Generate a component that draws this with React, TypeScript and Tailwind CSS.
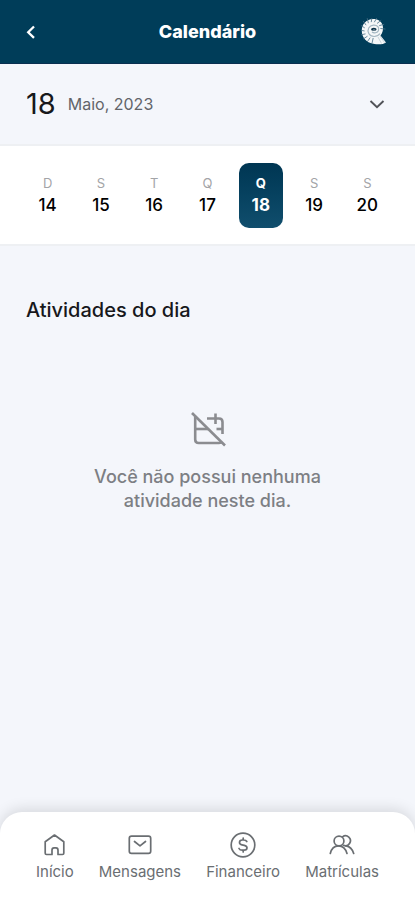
import React, { useState } from 'react';

const days = [
  { day: 14, letter: 'D', name: 'Domingo' },
  { day: 15, letter: 'S', name: 'Segunda' },
  { day: 16, letter: 'T', name: 'Terça' },
  { day: 17, letter: 'Q', name: 'Quarta' },
  { day: 18, letter: 'Q', name: 'Quinta' },
  { day: 19, letter: 'S', name: 'Sexta' },
  { day: 20, letter: 'S', name: 'Sábado' },
];

const ShellLogo: React.FC = () => {
  // Ridges fan out from the centre of the shell, each one ends in a notch on the rim
  const ridges = Array.from({ length: 13 }, (_, i) => {
    const a = ((i * 22 + 85) * Math.PI) / 180;
    return {
      x1: 11.5 + Math.cos(a) * 8,
      y1: 12 + Math.sin(a) * 8,
      x2: 11.5 + Math.cos(a + 0.12) * 13,
      y2: 12 + Math.sin(a + 0.12) * 13,
    };
  });

  return (
    <svg width="26" height="28" viewBox="0 0 26 28" fill="none" aria-hidden="true">
      <path
        d="M12 1C17 .8 20.500 3.500 21.700 7.500C22.700 11 21.500 15 19.500 17.500L25 24.500C22 26.800 15 27 9.500 25C4 23 .8 18.500 .8 12.500C.8 6 5.500 1.200 12 1Z"
        fill="#f4f7f8"
      />
      {ridges.map((r, i) => (
        <line key={i} x1={r.x1} y1={r.y1} x2={r.x2} y2={r.y2} stroke="#476f85" strokeWidth="0.8" />
      ))}
      <path d="M17 19L20.500 25.500M19 18L23.500 24.500" stroke="#b4c4cd" strokeWidth="0.7" />
      <path
        d="M19 15.500C16 19.500 10 19.500 7.800 15.500C5.800 11.500 8 7.500 12.500 7.200C16.500 7 18.500 9.500 17.500 12.500C16.500 15 13 15.500 11 14"
        stroke="#a3b6c1"
        strokeWidth="1.200"
      />
      <ellipse cx="12.800" cy="11.200" rx="2.800" ry="1.500" fill="#0d3349" />
      <path d="M12 11.800H14.200" stroke="#8fa5b2" strokeWidth="0.8" />
    </svg>
  );
};

const CalendarOffIcon: React.FC = () => (
  <svg width="36" height="36" viewBox="0 0 36 36" fill="none" stroke="#8b8c90" strokeWidth="2.600" aria-hidden="true">
    <path d="M2 2L35 34.500" />
    <path d="M5.200 6V28.500Q5.200 32 8.700 32H29Q31.500 32 32 31" />
    <path d="M5 18H18" />
    <path d="M17 7.500H29Q32.500 7.500 32.500 11V23" />
    <path d="M26.500 18H33" />
    <path d="M25.500 2.500V13" />
  </svg>
);

const HomeIcon: React.FC = () => (
  <svg width="26" height="26" viewBox="0 0 26 26" fill="none" stroke="currentColor" strokeWidth="1.700" strokeLinejoin="round">
    <path d="M3.200 9.700L12.500 3L21.800 9.700V21.200Q21.800 22.500 20.500 22.500H16V18.200Q16 15.800 14 15.800H12Q10 15.800 10 18.200V22.500H4.500Q3.200 22.500 3.200 21.200Z" />
  </svg>
);

const MailIcon: React.FC = () => (
  <svg width="26" height="26" viewBox="0 0 26 26" fill="none" stroke="currentColor" strokeWidth="1.700" strokeLinecap="round" strokeLinejoin="round">
    <rect x="2.300" y="4.200" width="21.400" height="17.200" rx="2.200" />
    <path d="M7.500 9.500L13 13.800L18.500 9.500" />
  </svg>
);

const MoneyIcon: React.FC = () => (
  <svg width="26" height="26" viewBox="0 0 26 26" fill="none" stroke="currentColor" strokeWidth="1.700" strokeLinecap="round" strokeLinejoin="round">
    <circle cx="13" cy="13" r="11.800" />
    <path d="M16.800 9.500Q16 8 13.500 8H12.300Q9.500 8 9.500 10.400Q9.500 12.300 12 12.800L14.300 13.300Q17 13.900 17 15.800Q17 18.200 14 18.200H12.300Q9.800 18.200 9 16.500M13.200 6V8M13.200 18.200V20" />
  </svg>
);

const PeopleIcon: React.FC = () => (
  <svg width="26" height="26" viewBox="0 0 26 26" fill="none" stroke="currentColor" strokeWidth="1.700" strokeLinecap="round" strokeLinejoin="round">
    <circle cx="10" cy="9" r="4.900" />
    <path d="M13.500 4.900A4.900 4.900 0 1 1 14.500 13.300" />
    <path d="M1.300 21.500C2.500 16.500 5.500 13.900 9.500 13.900S16.500 16.500 18 21.500" />
    <path d="M17 13.900C21 14.500 23.500 17.500 24.700 21.500" />
  </svg>
);

const navItems = [
  { label: 'Início', icon: HomeIcon },
  { label: 'Mensagens', icon: MailIcon },
  { label: 'Financeiro', icon: MoneyIcon },
  { label: 'Matrículas', icon: PeopleIcon },
];

const App: React.FC = () => {
  const [selected, setSelected] = useState(18);

  return (
    <div className="flex min-h-screen flex-col bg-[#f4f6fb] font-['Inter',sans-serif] text-[#17181b]">
      <header className="grid h-16 grid-cols-3 items-center border-b border-[#0a2f50] bg-[#003d59] px-6 text-white">
        <button type="button" aria-label="Voltar" className="justify-self-start">
          <svg width="14" height="18" viewBox="0 0 14 18" fill="none" stroke="currentColor" strokeWidth="2.300" aria-hidden="true">
            <path d="M10 3.500L4.200 9.200L10 14.900" />
          </svg>
        </button>
        <h1 className="justify-self-center text-lg font-extrabold">Calendário</h1>
        <div className="justify-self-end pr-1">
          <ShellLogo />
        </div>
      </header>

      <main className="flex-1">
        <button type="button" aria-label="Escolher data" className="flex h-20 w-full items-center px-[26px]">
          <span className="text-[29px]">{selected}</span>
          <span className="ml-3 text-base text-[#626469]">Maio, 2023</span>
          <svg className="mr-1 ml-auto" width="16" height="16" viewBox="0 0 16 16" fill="none" stroke="#505257" strokeWidth="1.900" aria-hidden="true">
            <path d="M1.500 5L8 11.300L14.500 5" />
          </svg>
        </button>

        <div className="flex h-[102px] items-center border-y-2 border-[#eef0f3] bg-white px-[21px]">
          {days.map(({ day, letter, name }) => (
            <div key={day} className="flex flex-1 justify-center">
              <button
                type="button"
                aria-label={`${name}, ${day}`}
                onClick={() => setSelected(day)}
                className={
                  day === selected
                    ? 'flex h-[65px] w-11 flex-col items-center justify-center rounded-[10px] bg-linear-to-b from-[#003653] to-[#104e6d] text-white'
                    : 'flex h-[65px] w-11 flex-col items-center justify-center text-black'
                }
              >
                <span className={day === selected ? 'text-[13px] leading-5 font-bold' : 'text-[13px] leading-5 text-[#a3a4a7]'}>
                  {letter}
                </span>
                <span className={day === selected ? 'text-[17px] leading-6 font-bold' : 'text-[17px] leading-6 font-medium'}>
                  {day}
                </span>
              </button>
            </div>
          ))}
        </div>

        <section className="px-[26px] pt-[50px]">
          <h2 className="text-xl leading-7 font-medium">Atividades do dia</h2>
          <div className="flex flex-col items-center pt-[87px] text-center">
            <CalendarOffIcon />
            <p className="mt-[18px] max-w-60 text-lg leading-6 font-medium text-[#7d7f84]">
              Você não possui nenhuma atividade neste dia.
            </p>
          </div>
        </section>
      </main>

      <nav className="flex justify-between rounded-t-[22px] bg-white px-9 pt-5 pb-[18px] shadow-[0_-3px_14px_rgba(0,0,0,0.12)]">
        {navItems.map(({ label, icon: Icon }) => (
          <a key={label} href="#" className="flex flex-col items-center gap-1 text-[#6a6e72]">
            <Icon />
            <span className="text-[15px] leading-5">{label}</span>
          </a>
        ))}
      </nav>
    </div>
  );
};

export default App;
